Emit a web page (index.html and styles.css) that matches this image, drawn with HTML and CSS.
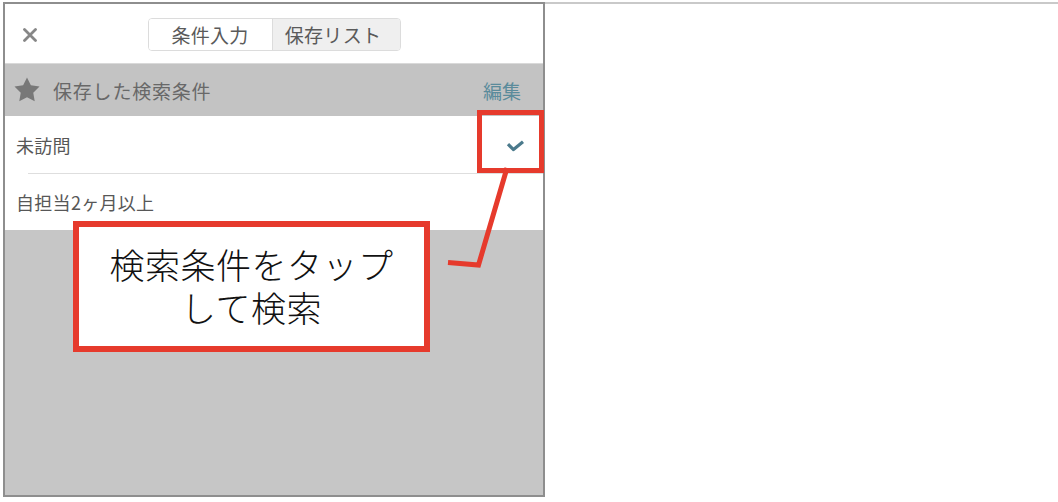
FILE: index.html
```html
<!DOCTYPE html>
<html lang="ja">
<head>
<meta charset="utf-8">
<title>保存リスト</title>
<link rel="stylesheet" href="styles.css">
</head>
<body>
<div class="screen">
  <section class="panel">
    <header class="panel-head">
      <button class="close" aria-label="閉じる">
        <svg width="14" height="14" viewBox="0 0 14 14"><path d="M1.5 1.5 L12.5 12.5 M12.5 1.5 L1.5 12.5" stroke="#878787" stroke-width="2.8" stroke-linecap="round"/></svg>
      </button>
      <nav class="segmented">
        <span class="seg">条件入力</span>
        <span class="seg seg-active">保存リスト</span>
      </nav>
      <span class="head-spacer"></span>
    </header>

    <div class="section-bar">
      <svg class="star" width="30" height="30" viewBox="0 0 24 24"><polygon points="12 2 15.09 8.26 22 9.27 17 14.14 18.18 21.02 12 17.77 5.82 21.02 7 14.14 2 9.27 8.91 8.26" fill="#787878"/></svg>
      <span class="section-title">保存した検索条件</span>
      <span class="edit">編集</span>
    </div>

    <ul class="saved-list">
      <li class="saved-row">
        <span>未訪問</span>
        <svg class="check" width="19" height="12" viewBox="0 0 19 12"><path d="M2 4.2 L7.5 9.6 L17 1.8" fill="none" stroke="#4b7a8c" stroke-width="3.2" stroke-linejoin="round"/></svg>
      </li>
      <li class="saved-row">
        <span>自担当2ヶ月以上</span>
      </li>
    </ul>

    <div class="panel-rest"></div>
  </section>
  <div class="rest"></div>

  <svg class="marks" width="1058" height="502" viewBox="0 0 1058 502">
    <rect x="479.5" y="112.5" width="62" height="58" fill="none" stroke="#e63a2c" stroke-width="5"/>
    <polyline points="507,168 478.5,265 448,262.5" fill="none" stroke="#e63a2c" stroke-width="5"/>
  </svg>
  <div class="callout">
    <span class="callout-line">検索条件をタップ</span>
    <span class="callout-line">して検索</span>
  </div>
</div>
</body>
</html>
```

FILE: styles.css
```css
html, body {
  margin: 0;
  padding: 0;
  background: #fff;
}

body {
  font-family: "Noto Sans CJK JP", "Noto Sans", sans-serif;
  width: 1058px;
  height: 502px;
  overflow: hidden;
}

.screen {
  position: relative;
  display: flex;
  align-items: flex-start;
  padding-top: 2px;
  height: 500px;
}

.panel {
  box-sizing: border-box;
  margin-left: 3px;
  width: 542px;
  height: 495px;
  border: 2px solid #8e8e8e;
  display: flex;
  flex-direction: column;
  background: #c5c5c5;
}

.rest {
  flex: 1;
  border-top: 2px solid #c9c9c9;
}

/* top bar with close button and segmented control */
.panel-head {
  height: 59px;
  background: #fff;
  border-bottom: 1px solid #d9d9d9;
  display: grid;
  grid-template-columns: 1fr auto 1fr;
  align-items: center;
}

.close {
  justify-self: start;
  margin-left: 18px;
  margin-top: 2px;
  padding: 0;
  border: 0;
  background: none;
  width: 14px;
  height: 14px;
  display: flex;
}

.segmented {
  display: grid;
  grid-template-columns: 123px 128px;
  height: 33px;
  margin-top: 2px;
  box-sizing: border-box;
  border: 1px solid #dcdcdc;
  border-radius: 4px;
  overflow: hidden;
}

.seg {
  display: flex;
  align-items: center;
  justify-content: center;
  font-size: 19px;
  color: #5a5a5a;
  background: #fff;
  letter-spacing: 0.3px;
}

.seg-active {
  background: #efefef;
  border-left: 1px solid #dcdcdc;
  padding-right: 6px;
}

/* grey section heading */
.section-bar {
  height: 52px;
  display: flex;
  align-items: center;
  padding: 0 22px 0 7px;
  background: #c3c3c3;
}

.star {
  margin-right: 11px;
}

.section-title {
  font-size: 19px;
  letter-spacing: 0.8px;
  color: #686868;
  flex: 1;
}

.edit {
  font-size: 19px;
  color: #5a8b9b;
}

/* saved conditions */
.saved-list {
  list-style: none;
  margin: 0;
  padding: 0;
  background: #fff;
}

.saved-row {
  height: 57px;
  display: flex;
  align-items: center;
  justify-content: space-between;
  padding: 0 18px 0 11px;
  font-size: 18px;
  letter-spacing: 0.3px;
  color: #575757;
}

.saved-row + .saved-row {
  height: 56px;
  border-top: 1px solid #dedede;
  margin-left: 23px;
  padding-left: 0;
  text-indent: -12px;
}

.check {
  margin-top: 2px;
}

.panel-rest {
  flex: 1;
  background: #c6c6c6;
}

/* annotation layer */
.marks {
  position: absolute;
  left: 0;
  top: 0;
  pointer-events: none;
}

.callout {
  position: absolute;
  left: 73px;
  top: 221px;
  width: 357px;
  height: 131px;
  box-sizing: border-box;
  border: 6px solid #e63a2c;
  background: #fff;
  padding-top: 19px;
  display: flex;
  flex-direction: column;
  align-items: center;
  gap: 7px;
  font-size: 35px;
  font-weight: 300;
  letter-spacing: 0.5px;
  color: #111;
}

.callout-line {
  display: block;
  line-height: 36px;
}
```
